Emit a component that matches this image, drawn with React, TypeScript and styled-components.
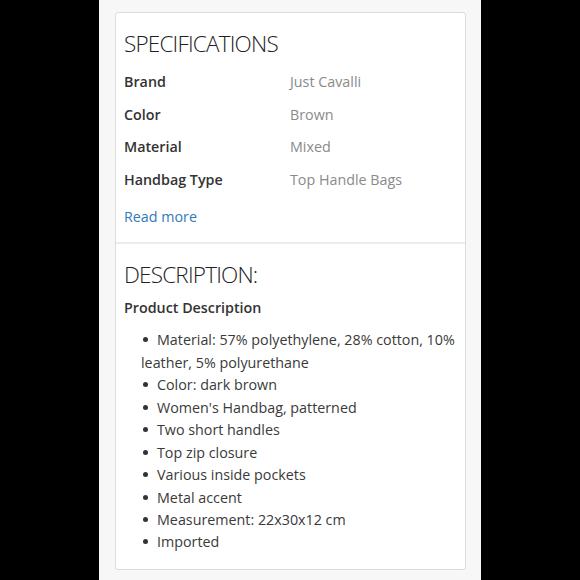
import * as React from 'react';
import styled, { createGlobalStyle } from 'styled-components';

const Global = createGlobalStyle`
  html, body {
    margin: 0;
    padding: 0;
    background: #000;
  }
  body {
    font-family: "Open Sans", "Liberation Sans", sans-serif;
    color: #333;
  }
`;

const Page = styled.div`
  width: 382px;
  height: 580px;
  margin: 0 auto;
  background: #f7f7f7;
  padding: 12px 15px 0 16px;
  box-sizing: border-box;
`;

const Card = styled.div`
  background: #fff;
  border: 1px solid #dcdcdc;
  border-radius: 3px;
`;

const Section = styled.section<{ $bottom?: number }>`
  padding: 15px 8px ${(p) => p.$bottom ?? 14}px 8px;
  & + & {
    border-top: 2px solid #ececec;
  }
`;

const Heading = styled.h2`
  margin: 0;
  font-size: 22.5px;
  line-height: 32px;
  font-weight: 300;
  letter-spacing: -0.8px;
  color: #222;
`;

const SpecTable = styled.div`
  margin-top: 6px;
  display: grid;
  grid-template-columns: 166px 1fr;
  font-size: 14.3px;
  line-height: 32.6px;
`;

const Label = styled.div`
  font-weight: 600;
  color: #333;
`;

const Value = styled.div`
  color: #8a8a8a;
`;

const ReadMore = styled.a`
  display: block;
  margin-top: 10px;
  font-size: 14.3px;
  line-height: 22px;
  color: #2f7ab9;
  text-decoration: none;
`;

const SubHeading = styled.h3`
  margin: 6px 0 0;
  font-size: 14.3px;
  line-height: 22px;
  font-weight: 600;
  color: #333;
`;

const List = styled.ul`
  margin: 10px 0 0 17px;
  padding: 0;
  list-style: none;
  font-size: 14.3px;
  line-height: 22.45px;
  color: #3a3a3a;
`;

const Item = styled.li`
  &::before {
    content: "";
    display: inline-block;
    width: 5px;
    height: 5px;
    border-radius: 50%;
    background: #333;
    margin: 0 9px 0 2px;
    vertical-align: 3px;
  }
`;

const specs: [string, string][] = [
  ['Brand', 'Just Cavalli'],
  ['Color', 'Brown'],
  ['Material', 'Mixed'],
  ['Handbag Type', 'Top Handle Bags'],
];

const bullets = [
  'Material: 57% polyethylene, 28% cotton, 10% leather, 5% polyurethane',
  'Color: dark brown',
  "Women's Handbag, patterned",
  'Two short handles',
  'Top zip closure',
  'Various inside pockets',
  'Metal accent',
  'Measurement: 22x30x12 cm',
  'Imported',
];

export default function App() {
  return (
    <>
      <Global />
      <Page>
        <Card>
          <Section>
            <Heading>SPECIFICATIONS</Heading>
            <SpecTable>
              {specs.map(([k, v]) => (
                <React.Fragment key={k}>
                  <Label>{k}</Label>
                  <Value>{v}</Value>
                </React.Fragment>
              ))}
            </SpecTable>
            <ReadMore href="#">Read more</ReadMore>
          </Section>
          <Section $bottom={15}>
            <Heading>DESCRIPTION:</Heading>
            <SubHeading>Product Description</SubHeading>
            <List>
              {bullets.map((b) => (
                <Item key={b}>{b}</Item>
              ))}
            </List>
          </Section>
        </Card>
      </Page>
    </>
  );
}
